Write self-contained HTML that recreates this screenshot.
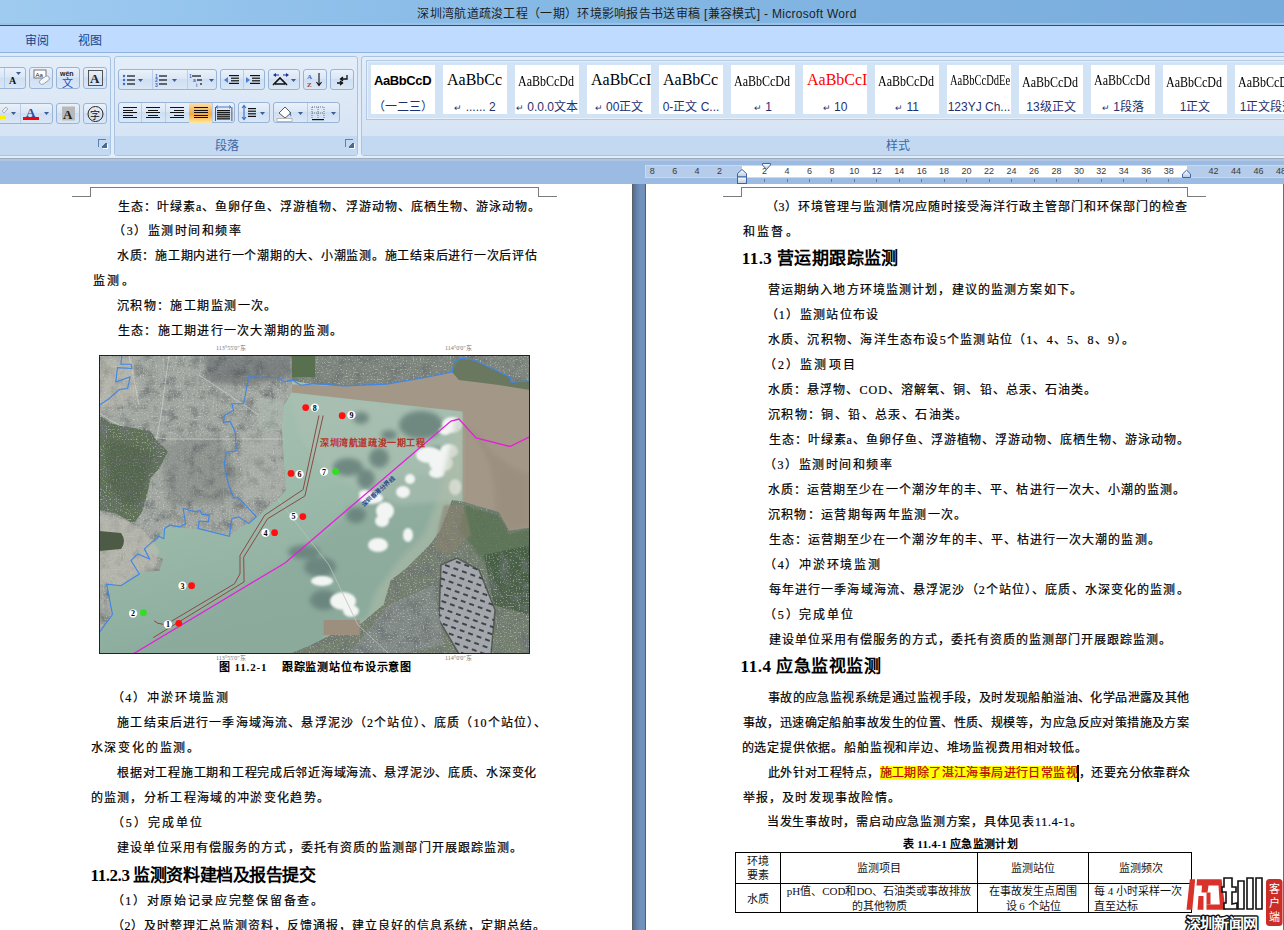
<!DOCTYPE html>
<html lang="zh-CN"><head><meta charset="utf-8">
<style>
*{margin:0;padding:0;box-sizing:border-box}
html,body{width:1284px;height:930px;overflow:hidden;background:#9bb9e0;font-family:"Liberation Sans",sans-serif}
.a{position:absolute}
#title{left:0;top:0;width:1284px;height:26px;box-shadow:inset 0 -2px 0 #9cc3e6;background:linear-gradient(90deg,#9fcbf0 0%,#92c2ec 20%,#84b8e4 45%,#7fb2e0 70%,#78acdc 100%);border-bottom:1px solid #3c4b5c}
#title .t{left:-5px;top:6px;width:1284px;text-align:center;font-size:12px;letter-spacing:0.3px;color:#1e1e1e;line-height:16px}
#tabs{left:0;top:26px;width:1284px;height:27px;background:#bfdbff;border-bottom:1px solid #8eb3e0}
#tabs span{position:absolute;top:6.5px;font-size:12px;color:#15428b;line-height:16px}
#ribbon{left:0;top:53px;width:1284px;height:105px;background:linear-gradient(#dde9f7,#e3eefa)}
.grp{position:absolute;top:3px;height:100px;border:1px solid #a9c3e2;border-radius:3px;background:linear-gradient(#e4eef9 0%,#dae6f5 60%,#d3e2f3 100%);overflow:hidden}
.grp .lbl{position:absolute;left:0;bottom:0;width:100%;height:19px;background:#c3d9f2;text-align:center;font-size:12px;color:#3e67a3;line-height:19px}
#rulerbar{left:0;top:158px;width:1284px;height:26px;background:#9cbbe2}
.page{position:absolute;top:184px;height:746px;background:#fff}
#gap{left:632px;top:184px;width:14px;height:746px;background:linear-gradient(90deg,#5b5f67 0,#5b5f67 1px,#556d8d 1px,#6a89b2 6px,#7293bd 9px,#6f8fba 13px,#5b5f67 13px)}
.tx{position:absolute;font-size:12px;line-height:13px;color:#000;white-space:nowrap;font-family:"Liberation Serif",serif;-webkit-text-stroke:0.2px #000}
.hl{background:#ffff00;color:#ff0000}
.cur{display:inline-block;width:2px;height:13px;background:#000;vertical-align:top;margin-left:-1px;box-shadow:0 2px 0 #000,0 -2px 0 #000}
.btn{border:1px solid #9ab4d6;border-radius:3px;background:linear-gradient(#e9f1fb 0%,#dbe7f6 45%,#cfdff2 50%,#d9e7f7 100%)}
.btn .dv{position:absolute;top:0;width:1px;height:100%;background:#b9cde6}
.hot{background:linear-gradient(#fbe1ad 0%,#f9b65c 40%,#f8a740 55%,#fcd27a 85%,#fde9a6 100%)}
.lnch{position:absolute;bottom:8px;width:8px;height:8px;border-top:1px solid #5f80ab;border-left:1px solid #5f80ab}
.lnch i{position:absolute;left:3px;top:3px;width:5px;height:5px;background:linear-gradient(135deg,transparent 0 35%,#4a6b98 35%);box-shadow:1px 1px 0 #fff}
.gal{border:1px solid #b3c9e6;background:#d3e3f6;box-shadow:inset 0 0 0 1px #e6eef9}
.tile{background:#fff;overflow:hidden}
.tile .smp{position:absolute;left:3px;white-space:nowrap;line-height:18px;color:#000}
.tile .tl{position:absolute;left:0;top:35px;width:100%;text-align:center;font-size:12px;line-height:14px;color:#1f3070;white-space:nowrap}
.rn{width:20px;text-align:center;font-size:9px;line-height:11px;color:#3a3a3a;font-family:"Liberation Sans",sans-serif}
.tcap{font-family:"Liberation Serif",serif;font-size:11px;font-weight:bold;line-height:14px;white-space:nowrap;letter-spacing:0.3px}
.tbl{border:1px solid #000;background:#fff}
.tc{font-family:"Liberation Serif",serif;font-size:11px;line-height:14px;text-align:center;white-space:nowrap;color:#111}

</style></head><body>
<div id="title" class="a"><div class="t a">深圳湾航道疏浚工程（一期）环境影响报告书送审稿 [兼容模式] - Microsoft Word</div></div>
<div id="tabs" class="a"><span style="left:25px">审阅</span><span style="left:78px">视图</span></div>
<div id="ribbon" class="a">
<div class="grp" style="left:-4px;width:115px;"><div class="lbl"></div><div class="lnch" style="left:101px"><i></i></div></div>
<div class="grp" style="left:114px;width:244px;"><div class="lbl" style="text-indent:-18px;line-height:21px">段落</div><div class="lnch" style="left:230px"><i></i></div></div>
<div class="grp" style="left:361px;width:940px;"><div class="lbl" style="width:1072px;line-height:21px">样式</div></div>
</div>
<div class="a btn" style="left:-6px;top:67px;width:31.5px;height:22px"><div class="dv" style="left:9px"></div></div>
<div class="a btn" style="left:29px;top:67px;width:24px;height:22px"></div>
<div class="a btn" style="left:56px;top:67px;width:24px;height:22px"></div>
<div class="a btn" style="left:83px;top:67px;width:24px;height:22px"></div>
<div class="a btn" style="left:-6px;top:103px;width:58.5px;height:21px"><div class="dv" style="left:25px"></div></div>
<div class="a btn" style="left:56px;top:103px;width:24px;height:21px"></div>
<div class="a btn" style="left:83px;top:103px;width:24px;height:21px"></div>
<svg class="a" style="left:0px;top:68px" width="25" height="20" viewBox="0 0 25 20"><text x="9" y="16" font-family="Liberation Serif" font-weight="bold" font-size="10" fill="#111">A</text><path d="M16 4 h5 l-2.5 3z" fill="#3b5d93"/></svg>
<svg class="a" style="left:30px;top:68px" width="23" height="20" viewBox="0 0 23 20"><rect x="4" y="2" width="12" height="8" fill="#fff" stroke="#555" stroke-width="0.8"/><text x="5.5" y="9" font-family="Liberation Sans" font-size="6" fill="#222">Aa</text><rect x="9" y="10" width="11" height="5" rx="2.5" transform="rotate(-35 14 12.5)" fill="#f4f6f8" stroke="#8a96a8" stroke-width="0.8"/></svg>
<svg class="a" style="left:57px;top:68px" width="23" height="20" viewBox="0 0 23 20"><text x="3" y="8" font-family="Liberation Sans" font-weight="bold" font-size="7" fill="#222">wén</text><text x="5" y="19" font-family="Liberation Sans" font-size="11" fill="#2744c8">文</text></svg>
<svg class="a" style="left:84px;top:68px" width="23" height="20" viewBox="0 0 23 20"><rect x="4.5" y="2.5" width="14" height="15" fill="none" stroke="#444" stroke-width="0.9"/><text x="6" y="15" font-family="Liberation Serif" font-weight="bold" font-size="13" fill="#222">A</text></svg>
<svg class="a" style="left:-6px;top:104px" width="58" height="20" viewBox="0 0 58 20"><path d="M8 7 l4 -4 2 2 -4 4z" fill="#eee" stroke="#888" stroke-width="0.6"/><rect x="6" y="12" width="6" height="3" fill="#ffee00"/><path d="M17 8 h5 l-2.5 3z" fill="#3b5d93"/><text x="32" y="13" font-family="Liberation Serif" font-weight="bold" font-size="13" fill="#2a4f9a">A</text><rect x="29" y="13" width="16" height="3" fill="#ff0000"/><path d="M50 8 h5 l-2.5 3z" fill="#3b5d93"/></svg>
<svg class="a" style="left:57px;top:104px" width="23" height="20" viewBox="0 0 23 20"><rect x="5" y="2.5" width="13" height="14" fill="#b9b9b9"/><text x="6" y="15" font-family="Liberation Serif" font-weight="bold" font-size="13" fill="#222">A</text></svg>
<svg class="a" style="left:84px;top:104px" width="23" height="20" viewBox="0 0 23 20"><circle cx="11.5" cy="10" r="7.5" fill="none" stroke="#222" stroke-width="1"/><text x="6" y="14.5" font-family="Liberation Sans" font-size="10" fill="#111">字</text></svg>
<div class="a btn" style="left:118px;top:69px;width:98.5px;height:21px"><div class="dv" style="left:32.5px"></div><div class="dv" style="left:67.69999999999999px"></div></div>
<div class="a btn" style="left:220px;top:69px;width:44.5px;height:21px"><div class="dv" style="left:22.099999999999994px"></div></div>
<div class="a btn" style="left:268px;top:69px;width:31.5px;height:21px"></div>
<div class="a btn" style="left:303px;top:69px;width:23.5px;height:21px"></div>
<div class="a btn" style="left:330px;top:69px;width:23.5px;height:21px"></div>
<div class="a btn" style="left:118px;top:102px;width:116.69999999999999px;height:21px"><div class="dv" style="left:21.599999999999994px"></div><div class="dv" style="left:45.599999999999994px"></div><div class="dv" style="left:70px"></div><div class="dv" style="left:93.19999999999999px"></div></div>
<div class="a hot" style="left:189px;top:102.5px;width:23px;height:20px"></div>
<div class="a btn" style="left:238px;top:102px;width:31.5px;height:21px"></div>
<div class="a btn" style="left:273px;top:102px;width:66.5px;height:21px"><div class="dv" style="left:32.89999999999998px"></div></div>
<svg class="a" style="left:118px;top:70px" width="34" height="20" viewBox="0 0 34 20"><g fill="#3a6bc4"><circle cx="6" cy="6" r="1.2"/><circle cx="6" cy="10" r="1.2"/><circle cx="6" cy="14" r="1.2"/></g><rect x="9" y="5.4" width="8" height="1.2" fill="#111"/><rect x="9" y="9.4" width="8" height="1.2" fill="#111"/><rect x="9" y="13.4" width="8" height="1.2" fill="#111"/><path d="M20 9 h5 l-2.5 3z" fill="#3b5d93"/></svg>
<svg class="a" style="left:152px;top:70px" width="34" height="20" viewBox="0 0 34 20"><text x="3" y="8" font-family="Liberation Sans" font-weight="bold" font-size="5" fill="#3a6bc4">1</text><text x="3" y="12" font-family="Liberation Sans" font-weight="bold" font-size="5" fill="#3a6bc4">2</text><text x="3" y="16.5" font-family="Liberation Sans" font-weight="bold" font-size="5" fill="#3a6bc4">3</text><rect x="7" y="5.4" width="8" height="1.2" fill="#111"/><rect x="7" y="9.4" width="8" height="1.2" fill="#111"/><rect x="7" y="13.4" width="8" height="1.2" fill="#111"/><path d="M20 9 h5 l-2.5 3z" fill="#3b5d93"/></svg>
<svg class="a" style="left:187px;top:70px" width="30" height="20" viewBox="0 0 30 20"><text x="2" y="8" font-family="Liberation Sans" font-weight="bold" font-size="5" fill="#3a6bc4">1</text><text x="6" y="12" font-family="Liberation Sans" font-weight="bold" font-size="5" fill="#3a6bc4">a</text><text x="9" y="17" font-family="Liberation Sans" font-weight="bold" font-size="5" fill="#3a6bc4">i</text><rect x="5" y="5.4" width="9" height="1.2" fill="#111"/><rect x="10" y="9.4" width="5" height="1.2" fill="#111"/><rect x="13" y="13.4" width="2" height="1.2" fill="#111"/><path d="M22 9 h5 l-2.5 3z" fill="#3b5d93"/></svg>
<svg class="a" style="left:221px;top:70px" width="22" height="20" viewBox="0 0 22 20"><g fill="#111"><rect x="8" y="5.0" width="10" height="1.2" fill="#111"/><rect x="10" y="7.6" width="8" height="1.2" fill="#111"/><rect x="10" y="10.2" width="8" height="1.2" fill="#111"/><rect x="8" y="12.8" width="10" height="1.2" fill="#111"/></g><path d="M3 10 l4 -3 v6z" fill="#4a80d8"/></svg>
<svg class="a" style="left:243px;top:70px" width="22" height="20" viewBox="0 0 22 20"><g fill="#111"><rect x="7" y="5.0" width="10" height="1.2" fill="#111"/><rect x="9" y="7.6" width="8" height="1.2" fill="#111"/><rect x="9" y="10.2" width="8" height="1.2" fill="#111"/><rect x="7" y="12.8" width="10" height="1.2" fill="#111"/></g><path d="M7 10 l-4 -3 v6z" fill="#4a80d8"/></svg>
<svg class="a" style="left:269px;top:70px" width="31" height="20" viewBox="0 0 31 20"><path d="M4 15 L11 8 L18 15 M6 14 h10" fill="none" stroke="#111" stroke-width="1.6"/><path d="M4 5 l3 -2 v4z M20 5 l-3 -2 v4z" fill="#1a2a9a"/><path d="M6 5 h4 M14 5 h4" stroke="#1a2a9a" stroke-width="1"/><path d="M22 9 h5 l-2.5 3z" fill="#3b5d93"/></svg>
<svg class="a" style="left:304px;top:70px" width="23" height="20" viewBox="0 0 23 20"><text x="3" y="9" font-family="Liberation Serif" font-weight="bold" font-size="7" fill="#3a6bc4">A</text><text x="3" y="17" font-family="Liberation Serif" font-weight="bold" font-size="7" fill="#b03030">Z</text><path d="M15 3 v12 M12.5 12 l2.5 3.5 2.5 -3.5" fill="none" stroke="#111" stroke-width="1.1"/></svg>
<svg class="a" style="left:331px;top:70px" width="23" height="20" viewBox="0 0 23 20"><path d="M16 5 v4 h-6 M12 7 l-2.5 2 2.5 2 M12 13 h-6 M9 11 l2.5 2 -2.5 2" fill="none" stroke="#111" stroke-width="1.3"/></svg>
<svg class="a" style="left:118px;top:103px" width="23" height="20" viewBox="0 0 23 20"><rect x="4.5" y="4" width="14" height="1.3" fill="#111" shape-rendering="crispEdges"/><rect x="4.5" y="6.5" width="10" height="1.3" fill="#111" shape-rendering="crispEdges"/><rect x="4.5" y="9" width="14" height="1.3" fill="#111" shape-rendering="crispEdges"/><rect x="4.5" y="11.5" width="10" height="1.3" fill="#111" shape-rendering="crispEdges"/><rect x="4.5" y="14" width="14" height="1.3" fill="#111" shape-rendering="crispEdges"/></svg>
<svg class="a" style="left:141px;top:103px" width="23" height="20" viewBox="0 0 23 20"><rect x="4.5" y="4" width="14" height="1.3" fill="#111" shape-rendering="crispEdges"/><rect x="6.5" y="6.5" width="10" height="1.3" fill="#111" shape-rendering="crispEdges"/><rect x="4.5" y="9" width="14" height="1.3" fill="#111" shape-rendering="crispEdges"/><rect x="6.5" y="11.5" width="10" height="1.3" fill="#111" shape-rendering="crispEdges"/><rect x="4.5" y="14" width="14" height="1.3" fill="#111" shape-rendering="crispEdges"/></svg>
<svg class="a" style="left:165px;top:103px" width="24" height="20" viewBox="0 0 24 20"><rect x="4.5" y="4" width="14" height="1.3" fill="#111" shape-rendering="crispEdges"/><rect x="8.5" y="6.5" width="10" height="1.3" fill="#111" shape-rendering="crispEdges"/><rect x="4.5" y="9" width="14" height="1.3" fill="#111" shape-rendering="crispEdges"/><rect x="8.5" y="11.5" width="10" height="1.3" fill="#111" shape-rendering="crispEdges"/><rect x="4.5" y="14" width="14" height="1.3" fill="#111" shape-rendering="crispEdges"/></svg>
<svg class="a" style="left:189px;top:103px" width="23" height="20" viewBox="0 0 23 20"><rect x="4.5" y="4" width="14" height="1.3" fill="#111" shape-rendering="crispEdges"/><rect x="4.5" y="6.5" width="14" height="1.3" fill="#111" shape-rendering="crispEdges"/><rect x="4.5" y="9" width="14" height="1.3" fill="#111" shape-rendering="crispEdges"/><rect x="4.5" y="11.5" width="14" height="1.3" fill="#111" shape-rendering="crispEdges"/><rect x="4.5" y="14" width="14" height="1.3" fill="#111" shape-rendering="crispEdges"/></svg>
<svg class="a" style="left:212px;top:103px" width="23" height="20" viewBox="0 0 23 20"><path d="M4 4 h15 M6 2.5 l-2 1.5 2 1.5 M17 2.5 l2 1.5 -2 1.5" fill="none" stroke="#3a6bc4" stroke-width="0.9"/><rect x="5" y="7.0" width="13" height="1.3" fill="#111"/><rect x="5" y="9.05" width="13" height="1.3" fill="#111"/><rect x="5" y="11.1" width="13" height="1.3" fill="#111"/><rect x="5" y="13.149999999999999" width="13" height="1.3" fill="#111"/><rect x="5" y="15.2" width="13" height="1.3" fill="#111"/><rect x="3" y="4" width="0.8" height="14" fill="#333"/><rect x="19.5" y="4" width="0.8" height="14" fill="#333"/></svg>
<svg class="a" style="left:238px;top:103px" width="32" height="20" viewBox="0 0 32 20"><path d="M6 3 v13 M4 5 l2 -2.5 2 2.5 M4 14 l2 2.5 2 -2.5" fill="none" stroke="#3a6bc4" stroke-width="1.1"/><rect x="10" y="5.0" width="8" height="1.2" fill="#111"/><rect x="10" y="7.6" width="8" height="1.2" fill="#111"/><rect x="10" y="10.2" width="8" height="1.2" fill="#111"/><rect x="10" y="12.8" width="8" height="1.2" fill="#111"/><path d="M22 9 h5 l-2.5 3z" fill="#3b5d93"/></svg>
<svg class="a" style="left:273px;top:103px" width="34" height="20" viewBox="0 0 34 20"><path d="M6 10 l6 -6 6 6 -6 5z" fill="#fff" stroke="#333" stroke-width="0.8"/><path d="M16 9 q3 2 2 5" fill="#3a6bc4"/><rect x="4" y="15.5" width="15" height="3" fill="#fff" stroke="#aaa" stroke-width="0.8"/><path d="M25 9 h5 l-2.5 3z" fill="#3b5d93"/></svg>
<svg class="a" style="left:307px;top:103px" width="33" height="20" viewBox="0 0 33 20"><path d="M5 4 h12 v12 M5 4 v12 M11 4 v12 M5 10 h12" fill="none" stroke="#555" stroke-width="0.8" stroke-dasharray="1 1"/><rect x="5" y="16" width="12" height="1.2" fill="#111"/><path d="M24 9 h5 l-2.5 3z" fill="#3b5d93"/></svg>
<div class="a gal" style="left:366px;top:60px;width:940px;height:60px"></div>
<div class="a tile" style="left:371px;top:65px;width:64px;height:49px"><div class="smp" style="font-family:'Liberation Sans';font-weight:bold;font-size:13px;letter-spacing:-0.4px;top:7px;left:3px">AaBbCcD</div><div class="tl">（一二三）</div></div>
<div class="a tile" style="left:443px;top:65px;width:64px;height:49px"><div class="smp" style="font-family:'Liberation Serif';font-size:16px;top:6px;left:4px">AaBbCc</div><div class="tl"><span style="font-size:9px">↵</span> ...... 2</div></div>
<div class="a tile" style="left:515px;top:65px;width:64px;height:49px"><div class="smp" style="font-family:'Liberation Serif';font-size:15px;top:7px;transform:scaleX(0.8);transform-origin:0 0">AaBbCcDd</div><div class="tl"><span style="font-size:9px">↵</span> 0.0.0文本</div></div>
<div class="a tile" style="left:587px;top:65px;width:64px;height:49px"><div class="smp" style="font-family:'Liberation Serif';font-size:16px;top:6px;left:4px">AaBbCcI</div><div class="tl"><span style="font-size:9px">↵</span> 00正文</div></div>
<div class="a tile" style="left:659px;top:65px;width:64px;height:49px"><div class="smp" style="font-family:'Liberation Serif';font-size:16px;top:6px;left:4px">AaBbCc</div><div class="tl">0-正文 C...</div></div>
<div class="a tile" style="left:731px;top:65px;width:64px;height:49px"><div class="smp" style="font-family:'Liberation Serif';font-size:15px;top:7px;transform:scaleX(0.8);transform-origin:0 0">AaBbCcDd</div><div class="tl"><span style="font-size:9px">↵</span> 1</div></div>
<div class="a tile" style="left:803px;top:65px;width:64px;height:49px"><div class="smp" style="font-family:'Liberation Serif';font-size:16px;top:6px;left:4px;color:#f00">AaBbCcI</div><div class="tl"><span style="font-size:9px">↵</span> 10</div></div>
<div class="a tile" style="left:875px;top:65px;width:64px;height:49px"><div class="smp" style="font-family:'Liberation Serif';font-size:15px;top:7px;transform:scaleX(0.8);transform-origin:0 0">AaBbCcDd</div><div class="tl"><span style="font-size:9px">↵</span> 11</div></div>
<div class="a tile" style="left:947px;top:65px;width:64px;height:49px"><div class="smp" style="font-family:'Liberation Serif';font-size:14px;top:7px;transform:scaleX(0.75);transform-origin:0 0">AaBbCcDdEe</div><div class="tl">123YJ Ch...</div></div>
<div class="a tile" style="left:1019px;top:65px;width:64px;height:49px"><div class="smp" style="font-family:'Liberation Serif';font-size:15px;top:8px;transform:scaleX(0.8);transform-origin:0 0">AaBbCcDd</div><div class="tl">13级正文</div></div>
<div class="a tile" style="left:1091px;top:65px;width:64px;height:49px"><div class="smp" style="font-family:'Liberation Serif';font-size:15px;top:6px;transform:scaleX(0.8);transform-origin:0 0">AaBbCcDd</div><div class="tl"><span style="font-size:9px">↵</span> 1段落</div></div>
<div class="a tile" style="left:1163px;top:65px;width:64px;height:49px"><div class="smp" style="font-family:'Liberation Serif';font-size:15px;top:8px;transform:scaleX(0.8);transform-origin:0 0">AaBbCcDd</div><div class="tl">1正文</div></div>
<div class="a tile" style="left:1235px;top:65px;width:64px;height:49px"><div class="smp" style="font-family:'Liberation Serif';font-size:15px;top:8px;transform:scaleX(0.8);transform-origin:0 0">AaBbCcDd</div><div class="tl">1正文段落</div></div>
<div id="rulerbar" class="a"></div>
<div class="page" style="left:0;width:632px"></div>
<div id="gap" class="a"></div>
<div class="page" style="left:646px;width:638px"></div>
<div class="a" style="left:0;top:157px;width:1284px;height:1px;background:#d3f0fc"></div>
<div class="a" style="left:0;top:158px;width:1284px;height:1px;background:#9daec3"></div>
<div class="a" style="left:0;top:159px;width:1284px;height:2px;background:#afc5e3"></div>
<div class="a" style="left:645px;top:165px;width:640px;height:13px;background:#b5cceb;border:1px solid #c9daf0"></div>
<div class="a" style="left:742px;top:166px;width:444.5px;height:11px;background:#fff"></div>
<div class="a rn" style="left:642.2px;top:166px">8</div>
<div class="a rn" style="left:664.7px;top:166px">6</div>
<div class="a rn" style="left:687.1px;top:166px">4</div>
<div class="a rn" style="left:709.6px;top:166px">2</div>
<div class="a rn" style="left:754.5px;top:166px">2</div>
<div class="a" style="left:764.0px;top:179px;width:1px;height:3px;background:#6a7a90"></div>
<div class="a rn" style="left:777.0px;top:166px">4</div>
<div class="a" style="left:786.5px;top:179px;width:1px;height:3px;background:#6a7a90"></div>
<div class="a rn" style="left:799.4px;top:166px">6</div>
<div class="a" style="left:808.9px;top:179px;width:1px;height:3px;background:#6a7a90"></div>
<div class="a rn" style="left:821.9px;top:166px">8</div>
<div class="a" style="left:831.4px;top:179px;width:1px;height:3px;background:#6a7a90"></div>
<div class="a rn" style="left:844.3px;top:166px">10</div>
<div class="a" style="left:853.8px;top:179px;width:1px;height:3px;background:#6a7a90"></div>
<div class="a rn" style="left:866.8px;top:166px">12</div>
<div class="a" style="left:876.3px;top:179px;width:1px;height:3px;background:#6a7a90"></div>
<div class="a rn" style="left:889.2px;top:166px">14</div>
<div class="a" style="left:898.7px;top:179px;width:1px;height:3px;background:#6a7a90"></div>
<div class="a rn" style="left:911.7px;top:166px">16</div>
<div class="a" style="left:921.2px;top:179px;width:1px;height:3px;background:#6a7a90"></div>
<div class="a rn" style="left:934.1px;top:166px">18</div>
<div class="a" style="left:943.6px;top:179px;width:1px;height:3px;background:#6a7a90"></div>
<div class="a rn" style="left:956.6px;top:166px">20</div>
<div class="a" style="left:966.1px;top:179px;width:1px;height:3px;background:#6a7a90"></div>
<div class="a rn" style="left:979.0px;top:166px">22</div>
<div class="a" style="left:988.5px;top:179px;width:1px;height:3px;background:#6a7a90"></div>
<div class="a rn" style="left:1001.5px;top:166px">24</div>
<div class="a" style="left:1011.0px;top:179px;width:1px;height:3px;background:#6a7a90"></div>
<div class="a rn" style="left:1024.0px;top:166px">26</div>
<div class="a" style="left:1033.5px;top:179px;width:1px;height:3px;background:#6a7a90"></div>
<div class="a rn" style="left:1046.4px;top:166px">28</div>
<div class="a" style="left:1055.9px;top:179px;width:1px;height:3px;background:#6a7a90"></div>
<div class="a rn" style="left:1068.9px;top:166px">30</div>
<div class="a" style="left:1078.4px;top:179px;width:1px;height:3px;background:#6a7a90"></div>
<div class="a rn" style="left:1091.3px;top:166px">32</div>
<div class="a" style="left:1100.8px;top:179px;width:1px;height:3px;background:#6a7a90"></div>
<div class="a rn" style="left:1113.8px;top:166px">34</div>
<div class="a" style="left:1123.3px;top:179px;width:1px;height:3px;background:#6a7a90"></div>
<div class="a rn" style="left:1136.2px;top:166px">36</div>
<div class="a" style="left:1145.7px;top:179px;width:1px;height:3px;background:#6a7a90"></div>
<div class="a rn" style="left:1158.7px;top:166px">38</div>
<div class="a" style="left:1168.2px;top:179px;width:1px;height:3px;background:#6a7a90"></div>
<div class="a rn" style="left:1203.6px;top:166px">42</div>
<div class="a rn" style="left:1226.0px;top:166px">44</div>
<div class="a rn" style="left:1248.5px;top:166px">46</div>
<div class="a rn" style="left:1270.9px;top:166px">48</div>
<svg class="a" style="left:736px;top:162px" width="12" height="23" viewBox="0 0 12 23"><defs><linearGradient id="mk" x1="0" y1="0" x2="0" y2="1"><stop offset="0" stop-color="#fff"/><stop offset="1" stop-color="#b9c9e0"/></linearGradient></defs><path d="M1.5 15 V11.5 L6 7.5 L10.5 11.5 V15 Z" fill="url(#mk)" stroke="#3f64a8" stroke-width="1"/><rect x="1.5" y="15" width="9" height="6.5" fill="url(#mk)" stroke="#3f64a8" stroke-width="1"/></svg>
<svg class="a" style="left:761px;top:162px" width="11" height="9" viewBox="0 0 11 9"><path d="M1.5 1.5 H9.5 V3 L5.5 7.5 L1.5 3 Z" fill="url(#mk)" stroke="#3f64a8" stroke-width="1"/></svg>
<svg class="a" style="left:1181px;top:169px" width="11" height="10" viewBox="0 0 11 10"><path d="M1.5 8.5 V5 L5.5 1.2 L9.5 5 V8.5 Z" fill="url(#mk)" stroke="#3f64a8" stroke-width="1"/></svg>
<div class="a" style="left:90px;top:187px;width:449px;height:10px;border:1px solid #7b7b7b;border-bottom:none"></div>
<div class="a" style="left:72px;top:196px;width:19px;height:1px;background:#7b7b7b"></div>
<div class="a" style="left:538px;top:196px;width:19px;height:1px;background:#7b7b7b"></div>
<div class="a" style="left:741px;top:187px;width:447px;height:10px;border:1px solid #7b7b7b;border-bottom:none"></div>
<div class="a" style="left:723px;top:196px;width:19px;height:1px;background:#7b7b7b"></div>
<div class="a" style="left:1187px;top:196px;width:19px;height:1px;background:#7b7b7b"></div>
<div class="a" style="left:1283px;top:184px;width:1px;height:746px;background:#6b6b6b"></div>
<div class="a tcap" style="left:903px;top:837px">表 11.4-1 应急监测计划</div>
<div class="a tbl" style="left:735px;top:852px;width:457px;height:61px">
<div class="a" style="left:44px;top:0;width:1px;height:100%;background:#000"></div>
<div class="a" style="left:241px;top:0;width:1px;height:100%;background:#000"></div>
<div class="a" style="left:352px;top:0;width:1px;height:100%;background:#000"></div>
<div class="a" style="left:0;top:30px;width:100%;height:1px;background:#000"></div>
<div class="a tc" style="left:0;top:1px;width:44px;line-height:14px">环境<br>要素</div>
<div class="a tc" style="left:45px;top:8px;width:196px">监测项目</div>
<div class="a tc" style="left:242px;top:8px;width:110px">监测站位</div>
<div class="a tc" style="left:353px;top:8px;width:104px">监测频次</div>
<div class="a tc" style="left:0;top:39px;width:44px">水质</div>
<div class="a tc" style="left:45px;top:31px;width:196px;line-height:15px">pH值、COD和DO、石油类或事故排放<br>的其他物质</div>
<div class="a tc" style="left:242px;top:31px;width:110px;line-height:15px">在事故发生点周围<br>设 6 个站位</div>
<div class="a tc" style="left:358px;top:31px;width:100px;line-height:15px;text-align:left">每 4 小时采样一次<br>直至达标</div>
</div>
<svg class="a" style="left:1183px;top:875px" width="101" height="55" viewBox="0 0 101 55">
<path d="M3.5 34.7 L9.3 34.7 L12.2 4.2 L6.8 4.2Z" fill="#d8322a"/>
<path d="M15.5 21 L20.5 21 L20.5 34.7 L14.5 34.7Z" fill="#d8322a"/>
<path d="M14 4.2 L38.6 4.2 L42.5 34.7 L23.5 34.7 L23.5 29.5 L36.8 29.5 L35.5 10.5 L25.5 10.5 L24.5 17.5 L18.5 17.5 L19 10.5 L13.5 10.5Z" fill="#d8322a"/>
<path d="M23.5 17.5 L27.5 17.5 L27.5 29.5 L23.5 29.5Z" fill="#d8322a"/>
<g fill="#fff" stroke="#111" stroke-width="1.6">
<path d="M41 3 h8 v9 h4 v5 h-4 v12 l5 -1 v6 h-13 v-6 h2 v-11 h-4 v-5 h2z"/>
<path d="M55 6 h6 v28 h-6z M64 3 h6 v31 h-6z M73 3 h6 v31 h-6z"/>
</g>
<text x="2.5" y="54" font-family="Liberation Sans" font-weight="bold" font-size="15" fill="#fff" stroke="#111" stroke-width="3" paint-order="stroke" stroke-linejoin="round" letter-spacing="-0.6">深圳新闻网</text>
<rect x="83" y="4" width="16.5" height="47" rx="3.5" fill="#cc2d28"/>
<text x="91.2" y="18" font-family="Liberation Serif" font-size="11" fill="#fff" text-anchor="middle">客</text>
<text x="91.2" y="32" font-family="Liberation Serif" font-size="11" fill="#fff" text-anchor="middle">户</text>
<text x="91.2" y="46" font-family="Liberation Serif" font-size="11" fill="#fff" text-anchor="middle">端</text>
</svg>
<svg class="a" style="left:99px;top:355px" width="431" height="299" viewBox="0 0 431 299">
<defs>
<filter id="tex" x="0" y="0" width="100%" height="100%">
 <feTurbulence type="fractalNoise" baseFrequency="0.09" numOctaves="4" seed="3" result="n"/>
 <feColorMatrix in="n" type="matrix" values="0 0 0 0 0.15  0 0 0 0 0.17  0 0 0 0 0.17  2.2 0 0 0 -1.0" result="dark"/>
 <feComposite in="dark" in2="SourceAlpha" operator="in" result="d2"/>
 <feTurbulence type="fractalNoise" baseFrequency="0.7" numOctaves="1" seed="11" result="n2"/>
 <feColorMatrix in="n2" type="matrix" values="0 0 0 0 0.9  0 0 0 0 0.91  0 0 0 0 0.92  1.5 0 0 0 -0.85" result="light"/>
 <feComposite in="light" in2="SourceAlpha" operator="in" result="l2"/>
 <feTurbulence type="fractalNoise" baseFrequency="0.6" numOctaves="1" seed="5" result="n3"/>
 <feColorMatrix in="n3" type="matrix" values="0 0 0 0 0.1  0 0 0 0 0.1  0 0 0 0 0.12  1.5 0 0 0 -0.85" result="dk2"/>
 <feComposite in="dk2" in2="SourceAlpha" operator="in" result="d3"/>
 <feMerge><feMergeNode in="SourceGraphic"/><feMergeNode in="d2"/><feMergeNode in="l2"/><feMergeNode in="d3"/></feMerge>
</filter>
<pattern id="bld" width="9" height="7" patternUnits="userSpaceOnUse" patternTransform="rotate(20)"><rect width="9" height="7" fill="#aeb1ba"/><rect x="1" y="1" width="5" height="2" fill="#34343f"/></pattern>
<clipPath id="clc"><path d="M342 210 L358 203 L380 215 L396 255 L392 299 L360 299 L340 265Z"/></clipPath>
<filter id="blur2"><feGaussianBlur stdDeviation="2.5"/></filter>
<filter id="blur1"><feGaussianBlur stdDeviation="1.2"/></filter>
<linearGradient id="sea" x1="0" y1="0" x2="0.3" y2="1">
 <stop offset="0" stop-color="#a9c2b3"/><stop offset="0.55" stop-color="#9cbaaa"/><stop offset="1" stop-color="#8aab9c"/>
</linearGradient>
</defs>
<rect width="431" height="299" fill="url(#sea)"/>
<!-- darker lower sea -->
<path d="M34 299 L186 208 L300 120 L360 120 L340 180 L300 230 L230 280 L190 299Z" fill="#8caa9c" opacity="0.7" filter="url(#blur2)"/>
<!-- photo region lighter top -->
<path d="M190 37 L363.5 56.6 L363.5 145 L300 150 L230 120 L200 80Z" fill="#abc0b2" opacity="0.6" filter="url(#blur2)"/>
<!-- mudflat -->
<path d="M180 29 L245 31 L288 29 L327 22 L353 17 L362 3 L375 5 L411 22 L431 26 L431 172.4 L409.8 175.8 L399.5 157 L365 146.7 L363.5 145 L363.5 56.6 L188 37Z" fill="#a39887"/>
<path d="M363.5 70 Q400 100 395 160 L410 176 L431 172 L431 120 Q400 110 380 80Z" fill="#978c7c" opacity="0.6" filter="url(#blur2)"/>
<!-- cloud shadows -->
<g fill="#66807a" filter="url(#blur2)" opacity="0.85">
<ellipse cx="322" cy="70" rx="22" ry="14"/><ellipse cx="262" cy="63" rx="8" ry="6"/>
<ellipse cx="249" cy="112" rx="15" ry="9"/><ellipse cx="280" cy="103" rx="10" ry="10"/>
<ellipse cx="267" cy="124" rx="9" ry="10"/><ellipse cx="205" cy="197" rx="16" ry="7"/><ellipse cx="337" cy="98" rx="9" ry="6"/><ellipse cx="338" cy="99" rx="8" ry="6"/>
<ellipse cx="257" cy="160" rx="10" ry="8"/><ellipse cx="221" cy="212" rx="16" ry="10"/>
<ellipse cx="225" cy="245" rx="14" ry="10"/><ellipse cx="290" cy="80" rx="8" ry="5"/>
</g>
<!-- clouds -->
<g fill="#f2f5f3" filter="url(#blur1)">
<ellipse cx="353" cy="70" rx="10" ry="8"/><ellipse cx="346" cy="76" rx="6" ry="4"/>
<ellipse cx="330" cy="100" rx="13" ry="8"/><ellipse cx="342" cy="108" rx="12" ry="9"/><ellipse cx="350" cy="96" rx="9" ry="7"/><ellipse cx="338" cy="118" rx="8" ry="5"/>
<ellipse cx="356" cy="132" rx="6" ry="8"/><ellipse cx="311" cy="124" rx="5" ry="5"/>
<ellipse cx="304" cy="137" rx="7" ry="6"/><ellipse cx="272" cy="143" rx="12" ry="6"/><ellipse cx="266" cy="139" rx="6" ry="4"/>
<ellipse cx="286" cy="156" rx="9" ry="9"/><ellipse cx="283" cy="166" rx="7" ry="6"/>
<ellipse cx="279" cy="190" rx="10" ry="7"/><ellipse cx="309" cy="180" rx="5" ry="7"/>
<ellipse cx="223" cy="226" rx="11" ry="5"/><ellipse cx="244" cy="246" rx="13" ry="9"/><ellipse cx="252" cy="256" rx="8" ry="6"/>
</g>
<!-- top urban strip -->
<path d="M0 0 L431 0 L431 25.7 L412 27 L411.5 22.3 L375.5 5.1 L361.8 3.4 L355 6.9 L353.2 17.1 L327.5 22.3 L288 29.1 L245.3 30.9 L211 29.1 L180 22.7 L150 22 L150 0Z" fill="#7f877f" filter="url(#tex)"/>
<path d="M353 17 L355 7 L362 3 L375 5 L411 22 L412 27 L431 26 L431 35 L400 30 L360 25Z" fill="#5a7055" opacity="0.8"/>
<!-- west land -->
<path d="M0 0 L193 0 L193 37 L185 50 L183 76 L185 109 L187 135 L178 145 L158 162 L131 180 L98 174 L67 172 L59 184 L47 195.5 L64 204 L60.6 215.7 L40 217 L22 231 L8.4 227.5 L13.5 259.4 L0 278Z" fill="#a3a8a2" filter="url(#tex)"/>
<path d="M105 0 L193 0 L193 22 L150 30 L110 28Z" fill="#4e5358" opacity="0.45" filter="url(#blur2)"/>
<path d="M60 90 L120 80 L140 120 L125 150 L70 150Z" fill="#6d7270" opacity="0.35" filter="url(#blur2)"/>
<path d="M0 5 L35 0 L40 40 L10 55 L0 50Z" fill="#c9c6b8" opacity="0.45" filter="url(#blur2)"/>
<path d="M140 75 L182 78 L184 140 L145 145Z" fill="#b8bbb6" opacity="0.35" filter="url(#blur1)"/>
<g fill="none" stroke="#d4d6d0" stroke-width="0.9" opacity="0.7">
<path d="M0 58 Q20 72 40 78 Q55 84 70 84"/>
<path d="M70 0 L62 60 L45 150"/><path d="M30 0 L40 50"/>
<path d="M70 84 L185 84"/><path d="M100 20 L160 60"/>
</g>
<path d="M0 60 L10.3 67.4 L20.7 70.8 L51.6 76 L56.8 84.6 L68.8 96.6 L60.2 113.8 L51.6 122.5 L48.2 139.7 L43 157 L34.4 169 L17.2 158.6 L0 155Z" fill="#5f7257" filter="url(#tex)"/>
<path d="M8 85 L35 90 L55 100 L48 125 L40 150 L25 150 L10 130Z" fill="#4a5a44" opacity="0.45" filter="url(#blur2)"/>
<path d="M0 160 L20 162 L45 175 L60 195 L55 215 L40 217 L22 231 L8 228 L0 230Z" fill="#c2c0b4" opacity="0.55" filter="url(#blur1)"/>
<path d="M0 176 L22 178 Q28 186 22 194 L0 196Z" fill="#4c5a46"/>
<path d="M193 0 L216 0 L216 22 L193 22Z" fill="#58704f"/>
<path d="M158 42 L185 45 L184 76 L160 76Z" fill="#b4c2b6" opacity="0.45" filter="url(#blur1)"/>
<path d="M358 60 L340 140 L325 180 L300 205 L278 235 L268 262 L230 280 L205 299 L240 299 L275 275 L295 240 L320 210 L345 180 L363 140 L363 60Z" fill="#b3bda9" opacity="0.5" filter="url(#blur2)"/>
<!-- SE land -->
<path d="M353 145 L365 146.7 L399.5 157 L409.8 175.8 L431 172.4 L431 299 L190 299 L211 290.6 L235 278.6 L262.4 268.3 L284.7 249.5 L291.5 225.5 L307 213.5 L331 189.5 L341 175.8Z" fill="#74806f" filter="url(#tex)"/>
<path d="M365 150 L400 160 L410 178 L431 174 L431 240 L400 230 L380 200 L360 175Z" fill="#5a7352" opacity="0.8" filter="url(#blur1)"/>
<path d="M342 210 L358 203 L380 215 L396 255 L392 299 L360 299 L340 265Z" fill="url(#bld)" opacity="0.8"/>
<path d="M342 210 L358 203 L380 215 L396 255 L392 299 L360 299 L340 265Z" fill="none" stroke="#3d4540" stroke-width="1.5" opacity="0.7"/>
<path d="M385 200 L431 190 L431 260 L395 250Z" fill="#3f5a3c" opacity="0.75" filter="url(#tex)"/>
<path d="M290 250 L335 230 L345 290 L300 299 L250 299Z" fill="#899092" opacity="0.7" filter="url(#tex)"/>
<path d="M345 150 L365 150 L372 180 L350 200 L335 195 L340 170Z" fill="#8a8270" opacity="0.6" filter="url(#blur1)"/>
<rect x="224.7" y="265" width="36" height="15" fill="#9d8f7e"/>
<!-- blue boundaries -->
<g fill="none" stroke="#3f86e6" stroke-width="1.1">
<polyline points="0,50.4 10,43.7 20.2,34.5 28.6,33.6 31.1,21.9 16.8,26.9 18.5,12.6 32.8,13.5 32,9.2 21.9,9.2 22.7,0"/>
<polyline points="146.4,150 139.6,142.9 134.6,142.9 129.5,129.5 125.3,109.3 127,97.5 137.1,95.8 136.3,77.4 131.2,66.4 124.5,67.3 125.3,60.5 134.6,55.5 132.9,48.8 144.7,48.8 149.7,21.9 180,22.7 185,26.9 193.5,25.2 201.9,30.3 216,28.6 245.3,30.9 288,29.1 327.5,22.3 353.2,17.1 355,6.9 361.8,3.4 375.5,5.1 411.5,22.3 412.3,27.4 431,25.7"/>
<polyline points="146.4,150 157.3,161.8 149.7,168.6 139.6,161.8 132.9,163.5 130.4,181.2 99.3,173.6 100.1,166 109.4,166.9 110.2,160.1 102.6,159.3 100.9,155.1 96.7,156.8 84.1,153.4 86.6,168.6 80.8,171.9 70.7,170.2 65.6,173.6 64.8,183.7 59.7,181.2 45.4,193.8 50.5,203.9 38.7,198.9 32,205.6 40.4,219 21.9,230.8 7.6,229.1 13.5,259.4 0,278"/>
</g>
<!-- bridge -->
<polyline points="178,143 230,210 259,270 290,299" fill="none" stroke="#b9c2bd" stroke-width="1" opacity="0.8"/>
<!-- channel lines -->
<g fill="none" stroke="#8a4a46" stroke-width="1">
<polyline points="220,60.5 204.1,134.6 165.7,160.2 141,200.4 141,218.7 135.5,228.8 72.5,266.2"/>
<polyline points="224.2,60.5 205.9,141 168.5,163.8 144.7,202.2 145.1,226.9 54.2,282.7"/>
<path d="M55.1,265.8 Q58,269 64.7,269.4"/>
</g>
<!-- pink line -->
<polyline points="34,299 186,208 352,66 360,64 377,83 411,91.5 431,81.5" fill="none" stroke="#e51fd9" stroke-width="1.3"/>
<!-- red title text -->
<text x="221" y="91" font-family="Liberation Serif" font-size="9" font-weight="bold" fill="#b8332a" letter-spacing="0.6">深圳湾航道疏浚一期工程</text>
<text x="0" y="0" font-family="Liberation Sans" font-size="6" font-weight="bold" fill="#2a4a95" transform="translate(265,152) rotate(-42)">深圳香港分界线</text>
<!-- markers -->
<g fill="#ff1010"><circle cx="206.7" cy="52.6" r="3.4"/><circle cx="243.2" cy="60.7" r="3.4"/><circle cx="192" cy="118.4" r="3.4"/><circle cx="203.8" cy="161.6" r="3.4"/><circle cx="175.6" cy="177.7" r="3.4"/><circle cx="92.6" cy="230.7" r="3.4"/><circle cx="79.8" cy="268.3" r="3.4"/></g>
<g fill="#30e020"><circle cx="236.6" cy="116.6" r="3.4"/><circle cx="44.4" cy="257.7" r="3.4"/></g>
<g fill="#fff"><circle cx="215.8" cy="52.6" r="4.2"/><circle cx="252.4" cy="60" r="4.2"/><circle cx="200.5" cy="119.2" r="4.2"/><circle cx="225" cy="116.6" r="4.2"/><circle cx="194.6" cy="161.2" r="4.2"/><circle cx="166.5" cy="177.7" r="4.2"/><circle cx="83.5" cy="230.7" r="4.2"/><circle cx="34.1" cy="258.5" r="4.2"/><circle cx="68.9" cy="269.4" r="4.2"/></g>
<g font-family="Liberation Serif" font-size="8" font-weight="bold" fill="#000" text-anchor="middle">
<text x="215.8" y="55.5">8</text><text x="252.4" y="62.9">9</text><text x="200.5" y="122.1">6</text><text x="225" y="119.5">7</text><text x="194.6" y="164.1">5</text><text x="166.5" y="180.6">4</text><text x="83.5" y="233.6">3</text><text x="34.1" y="261.4">2</text><text x="68.9" y="272.3">1</text>
</g>
<rect x="0.5" y="0.5" width="430" height="298" fill="none" stroke="#222" stroke-width="1"/>
</svg>
<div class="a" style="left:216px;top:345px;font-family:'Liberation Serif',serif;font-size:6px;color:#777;line-height:7px;white-space:nowrap">113°55'0"东</div>
<div class="a" style="left:445px;top:345px;font-family:'Liberation Serif',serif;font-size:6px;color:#777;line-height:7px;white-space:nowrap">114°0'0"东</div>
<div class="a" style="left:216px;top:655px;font-family:'Liberation Serif',serif;font-size:6px;color:#777;line-height:7px;white-space:nowrap">113°55'0"东</div>
<div class="a" style="left:445px;top:655px;font-family:'Liberation Serif',serif;font-size:6px;color:#777;line-height:7px;white-space:nowrap">114°0'0"东</div>
<div class="a" style="left:219px;top:660px;font-family:'Liberation Serif',serif;font-size:11px;font-weight:bold;line-height:14px;white-space:nowrap;letter-spacing:0.85px">图 11.2-1&nbsp;&nbsp;&nbsp;&nbsp;跟踪监测站位布设示意图</div>

<div id="L1" class="tx" style="left:117.80px;top:200.5px;letter-spacing:1.021px;">生态：叶绿素a、鱼卵仔鱼、浮游植物、浮游动物、底栖生物、游泳动物。</div>
<div id="L2" class="tx" style="left:113.30px;top:225.0px;letter-spacing:1.491px;">（3）监测时间和频率</div>
<div id="L3" class="tx" style="left:116.80px;top:250.2px;letter-spacing:0.755px;">水质：施工期内进行一个潮期的大、小潮监测。施工结束后进行一次后评估</div>
<div id="L4" class="tx" style="left:92.60px;top:275.2px;letter-spacing:2.480px;">监测。</div>
<div id="L5" class="tx" style="left:116.80px;top:300.2px;letter-spacing:1.416px;">沉积物：施工期监测一次。</div>
<div id="L6" class="tx" style="left:117.80px;top:325.2px;letter-spacing:1.261px;">生态：施工期进行一次大潮期的监测。</div>
<div id="L7" class="tx" style="left:111.50px;top:691.6px;letter-spacing:1.855px;">（4）冲淤环境监测</div>
<div id="L8" class="tx" style="left:117.30px;top:716.8px;letter-spacing:1.148px;">施工结束后进行一季海域海流、悬浮泥沙（2个站位）、底质（10个站位）、</div>
<div id="L9" class="tx" style="left:90.50px;top:742.0px;letter-spacing:1.809px;">水深变化的监测。</div>
<div id="L10" class="tx" style="left:117.30px;top:766.5px;letter-spacing:0.721px;">根据对工程施工期和工程完成后邻近海域海流、悬浮泥沙、底质、水深变化</div>
<div id="L11" class="tx" style="left:90.50px;top:791.9px;letter-spacing:1.321px;">的监测，分析工程海域的冲淤变化趋势。</div>
<div id="L12" class="tx" style="left:111.50px;top:816.7px;letter-spacing:2.163px;">（5）完成单位</div>
<div id="L13" class="tx" style="left:117.30px;top:841.8px;letter-spacing:1.097px;">建设单位采用有偿服务的方式，委托有资质的监测部门开展跟踪监测。</div>
<div id="L14" class="tx" style="left:111.50px;top:895.2px;letter-spacing:1.700px;">（1）对原始记录应完整保留备查。</div>
<div id="L15" class="tx" style="left:111.50px;top:919.7px;letter-spacing:0.962px;">（2）及时整理汇总监测资料，反馈通报，建立良好的信息系统，定期总结。</div>
<div id="R1" class="tx" style="left:765.50px;top:200.7px;letter-spacing:0.999px;">（3）环境管理与监测情况应随时接受海洋行政主管部门和环保部门的检查</div>
<div id="R2" class="tx" style="left:742.80px;top:225.7px;letter-spacing:2.313px;">和监督。</div>
<div id="R3" class="tx" style="left:767.70px;top:283.8px;letter-spacing:1.137px;">营运期纳入地方环境监测计划，建议的监测方案如下。</div>
<div id="R4" class="tx" style="left:765.50px;top:308.8px;letter-spacing:1.367px;">（1）监测站位布设</div>
<div id="R5" class="tx" style="left:767.80px;top:333.8px;letter-spacing:1.220px;">水质、沉积物、海洋生态布设5个监测站位（1、4、5、8、9）。</div>
<div id="R6" class="tx" style="left:764.00px;top:358.8px;letter-spacing:2.113px;">（2）监测项目</div>
<div id="R7" class="tx" style="left:767.80px;top:383.8px;letter-spacing:1.084px;">水质：悬浮物、COD、溶解氧、铜、铅、总汞、石油类。</div>
<div id="R8" class="tx" style="left:767.80px;top:408.8px;letter-spacing:1.394px;">沉积物：铜、铅、总汞、石油类。</div>
<div id="R9" class="tx" style="left:768.80px;top:433.8px;letter-spacing:0.961px;">生态：叶绿素a、鱼卵仔鱼、浮游植物、浮游动物、底栖生物、游泳动物。</div>
<div id="R10" class="tx" style="left:764.00px;top:458.8px;letter-spacing:1.513px;">（3）监测时间和频率</div>
<div id="R11" class="tx" style="left:767.80px;top:483.8px;letter-spacing:1.086px;">水质：运营期至少在一个潮汐年的丰、平、枯进行一次大、小潮的监测。</div>
<div id="R12" class="tx" style="left:767.80px;top:508.8px;letter-spacing:1.323px;">沉积物：运营期每两年监测一次。</div>
<div id="R13" class="tx" style="left:768.80px;top:533.8px;letter-spacing:1.063px;">生态：运营期至少在一个潮汐年的丰、平、枯进行一次大潮的监测。</div>
<div id="R14" class="tx" style="left:764.00px;top:558.8px;letter-spacing:1.705px;">（4）冲淤环境监测</div>
<div id="R15" class="tx" style="left:768.80px;top:583.8px;letter-spacing:1.117px;">每年进行一季海域海流、悬浮泥沙（2个站位）、底质、水深变化的监测。</div>
<div id="R16" class="tx" style="left:764.00px;top:608.8px;letter-spacing:1.780px;">（5）完成单位</div>
<div id="R17" class="tx" style="left:768.80px;top:633.8px;letter-spacing:1.023px;">建设单位采用有偿服务的方式，委托有资质的监测部门开展跟踪监测。</div>
<div id="R18" class="tx" style="left:767.90px;top:691.8px;letter-spacing:0.401px;">事故的应急监视系统是通过监视手段，及时发现船舶溢油、化学品泄露及其他</div>
<div id="R19" class="tx" style="left:742.60px;top:716.9px;letter-spacing:0.409px;">事故，迅速确定船舶事故发生的位置、性质、规模等，为应急反应对策措施及方案</div>
<div id="R20" class="tx" style="left:741.60px;top:741.6px;letter-spacing:0.815px;">的选定提供依据。船舶监视和岸边、堆场监视费用相对较低。</div>
<div id="R21" class="tx" style="left:767.90px;top:766.7px;letter-spacing:0.401px;">此外针对工程特点，<span class="hl">施工期除了湛江海事局进行日常监视</span><span class="cur"></span>，还要充分依靠群众</div>
<div id="R22" class="tx" style="left:742.60px;top:791.9px;letter-spacing:1.198px;">举报，及时发现事故险情。</div>
<div id="R23" class="tx" style="left:766.90px;top:816.2px;letter-spacing:0.765px;">当发生事故时，需启动应急监测方案，具体见表11.4-1。</div>
<div id="H1" class="tx" style="left:90.50px;top:865.5px;letter-spacing:-0.435px;font-size:17px;line-height:19px;font-weight:bold;-webkit-text-stroke:0;">11.2.3 监测资料建档及报告提交</div>
<div id="H2" class="tx" style="left:741.80px;top:249.3px;letter-spacing:0.409px;font-size:17px;line-height:19px;font-weight:bold;-webkit-text-stroke:0;">11.3 营运期跟踪监测</div>
<div id="H3" class="tx" style="left:740.60px;top:657.1px;letter-spacing:0.510px;font-size:17px;line-height:19px;font-weight:bold;-webkit-text-stroke:0;">11.4 应急监视监测</div>

</body></html>
